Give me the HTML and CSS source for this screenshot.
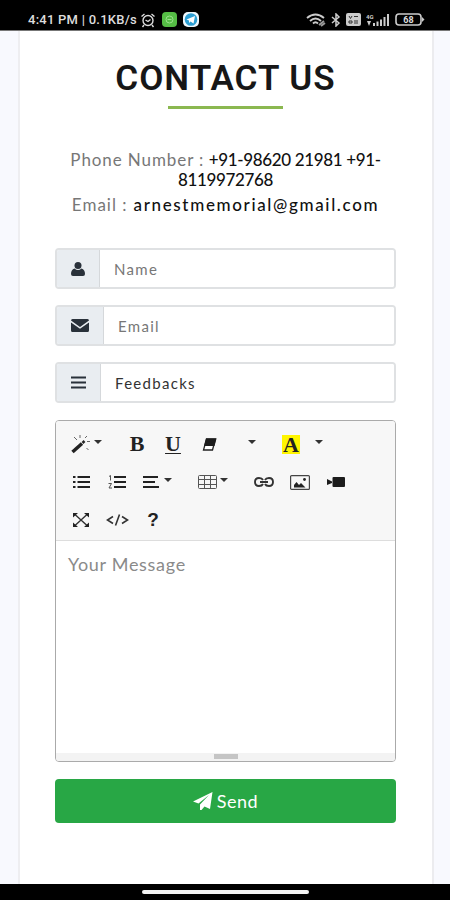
FILE: index.html
```
<!DOCTYPE html>
<html lang="en">
<head>
    <meta charset="UTF-8">
    <meta name="viewport" content="width=device-width, initial-scale=1.0">
    <title>Contact Us</title>
    <link rel="stylesheet" href="styles.css">
</head>
<body>
    <div class="status-bar">
        <div class="status-left">
            <span class="status-time">4:41 PM | 0.1KB/s</span>
            <svg class="alarm" width="16" height="16" viewBox="0 0 16 16" fill="none" stroke="#ddd" stroke-width="1.4"><circle cx="8" cy="8.5" r="5"/><path d="M1.5 4.5 4.5 2M14.500 4.500 11.500 2M5.500 8l2.500 1.500 2.500-2M4 13l-1.500 2M12 13l1.500 2"/></svg>
            <svg class="app" width="15" height="15" viewBox="0 0 15 15"><rect width="15" height="15" rx="4" fill="#55bd45"/><circle cx="7.500" cy="7.500" r="3.500" fill="none" stroke="#9be28d"/><path d="M5.500 7.500h4" stroke="#9be28d"/></svg>
            <svg class="app" width="16" height="15" viewBox="0 0 16 15"><rect width="16" height="15" rx="5" fill="#eef8fd"/><circle cx="8" cy="7.500" r="6.300" fill="#2c9fd3"/><path d="M3.500 7.500 12 4l-1.500 7.500-3-2-1.500 1.500V8.500z" fill="#fff"/></svg>
        </div>
        <div class="status-right">
            <svg width="20" height="14" viewBox="0 0 20 14" fill="none" stroke="#ccc" stroke-width="1.900"><path d="M1 5Q9.500-2 18 5M4 8q5.500-5 11 0M7 10.500q2.500-2.500 5 0"/><path d="M13 12l5-4M15 13l4-3" stroke="#999"/></svg>
            <svg width="10" height="14" viewBox="0 0 10 14" fill="none" stroke="#ccc" stroke-width="1.500"><path d="M1 4l7 6-3 3V1l3 3-7 6"/></svg>
            <svg width="15" height="13" viewBox="0 0 15 13"><rect width="15" height="13" rx="2" fill="#ccc"/><path d="M3 3l1.500 2.500L6 3M8 3.500h4M3 8h3v2H3zM8 8h4M8 10h4" fill="none" stroke="#333"/></svg>
            <svg width="24" height="14" viewBox="0 0 24 14" fill="#ccc"><path d="M7 10h2v3H7zM10.500 8.500h2V13h-2zM14 6.500h2V13h-2zM17.500 4h2v9h-2zM21 1h2v12h-2z"/><text x="0" y="6" class="tiny">4G</text><path d="M1 8h4l-2 5z"/></svg>
            <svg width="30" height="13" viewBox="0 0 30 13"><rect x="1" y="1" width="25" height="11" rx="3" fill="none" stroke="#ccc" stroke-width="1.600"/><path d="M27 4l2.500 2.500L27 9z" fill="#ccc"/><text x="13.500" y="9.800" class="battery">68</text></svg>
        </div>
    </div>

    <div class="page">
        <div class="card">
            <h1 class="title">CONTACT US</h1>
            <div class="title-line"></div>

            <div class="info">
                <p><span class="phone-label">Phone Number :</span> <b class="phone">+91-98620 21981 +91-<br>8119972768</b></p>
                <p class="mail"><span class="mail-label">Email :</span> <b>arnestmemorial@gmail.com</b></p>
            </div>

            <form>
                <div class="input-group">
                    <span class="addon addon-name"><svg width="14" height="14" viewBox="0 0 14 14" fill="#29313a"><circle cx="7" cy="3.600" r="3.500"/><path d="M3.500 6.500Q7 9.500 10.500 6.500 14 7.500 14 12q0 2-2 2H2q-2 0-2-2 0-4.500 3.500-5.500z"/></svg></span>
                    <input type="text" placeholder="Name">
                </div>
                <div class="input-group">
                    <span class="addon addon-email"><svg width="18" height="13" viewBox="0 0 18 13" fill="#29313a"><path d="M0 1.500Q0 0 1.500 0h15Q18 0 18 1.500L9 8zM0 3.500l9 6.300 9-6.300v8Q18 13 16.500 13h-15Q0 13 0 11.500z"/></svg></span>
                    <input type="text" placeholder="Email">
                </div>
                <div class="input-group">
                    <span class="addon addon-subject"><svg width="15" height="13" viewBox="0 0 15 13" stroke="#29313a" stroke-width="2"><path d="M0 1.500h15M0 6.500h15M0 11.500h15"/></svg></span>
                    <input type="text" class="subject" value="Feedbacks">
                </div>

                <div class="editor">
                    <div class="toolbar">
                        <div class="tool-row">
                            <span class="tool drop"><svg width="20" height="20" viewBox="0 0 20 20" stroke="#222" fill="none"><path d="M1.500 18 11 9.500" stroke-width="3.500"/><path d="M11.500 9l2-2" stroke-width="2.500"/><path d="M9 1v3M3 3l3 3M16 2l-2 2M16 7.500h3M15.500 14l2 2" stroke="#666"/></svg><i class="caret"></i></span>
                            <span class="tool serif">B</span>
                            <span class="tool serif underline-tool">U</span>
                            <span class="tool"><svg width="15" height="13" viewBox="0 0 15 13"><path d="M4.500 1h9L10.500 12h-9z" fill="#fff" stroke="#222" stroke-width="1.300"/><path d="M4 .5h10.500L12.500 8H2z" fill="#1c1c1c"/></svg></span>
                            <span class="tool caret-only font-caret"><i class="caret"></i></span>
                            <span class="tool serif"><span class="mark">A</span></span>
                            <span class="tool caret-only"><i class="caret"></i></span>
                        </div>
                        <div class="tool-row">
                            <span class="tool"><svg width="17" height="14" viewBox="0 0 17 14" stroke="#222" stroke-width="2"><path d="M0 2h2.500M4.500 2H17M0 7h2.500M4.500 7H17M0 12h2.500M4.500 12H17"/></svg></span>
                            <span class="tool"><svg width="18" height="14" viewBox="0 0 18 14" fill="none" stroke="#222" stroke-width="2"><path d="M6 2h12M6 7h12M6 12h12"/><path d="M1 1.500 2.500.5v5M.5 8.500h3L1 13h3" stroke-width="1" stroke="#555"/></svg></span>
                            <span class="tool drop align-tool"><svg width="16" height="12" viewBox="0 0 16 12" stroke="#222" stroke-width="2"><path d="M0 1h15M0 6h12M0 11h16"/></svg><i class="caret"></i></span>
                            <span class="tool drop table-tool"><svg width="19" height="14" viewBox="0 0 19 14" fill="none" stroke="#555"><rect x=".5" y=".5" width="18" height="13" rx="1"/><path d="M6.500.5v13M12.500.5v13M.5 4.500h18M.5 9.500h18"/></svg><i class="caret"></i></span>
                            <span class="tool"><svg width="20" height="10" viewBox="0 0 20 10" fill="none" stroke="#333" stroke-width="1.900"><path d="M9 3Q8 1 5 1 1 1 1 5t4 4q3 0 4-2M11 3q1-2 4-2 4 0 4 4t-4 4q-3 0-4-2M6 5h8"/></svg></span>
                            <span class="tool"><svg width="20" height="15" viewBox="0 0 20 15"><rect x=".6" y=".6" width="18.800" height="13.800" rx="1" fill="none" stroke="#444" stroke-width="1.200"/><path d="M4 12.500V10l2.500-3L9 10l2-2 1.500 1.500 3 3z" fill="#222"/><circle cx="14.500" cy="4.500" r="1.400" fill="#222"/></svg></span>
                            <span class="tool"><svg width="18" height="10" viewBox="0 0 18 10" fill="#1c1c1c"><path d="M0 2l5 2.500V6L0 8z"/><rect x="5.500" width="12.500" height="10" rx="1"/></svg></span>
                        </div>
                        <div class="tool-row">
                            <span class="tool"><svg width="16" height="14" viewBox="0 0 16 14" fill="#222"><path d="M2 1.500l12 11M14 1.500l-12 11" stroke="#333" stroke-width="1.400"/><path d="M0 0h5L0 4.500zM16 0v4.500L11 0zM0 14V9.500L5 14zM16 14h-5l5-4.500z"/></svg></span>
                            <span class="tool"><svg width="23" height="12" viewBox="0 0 23 12" fill="none" stroke="#333" stroke-width="1.600"><path d="M7 2.500 1.500 6 7 9.500M16 2.500 21.500 6 16 9.500M13.500.5l-4 11"/></svg></span>
                            <span class="tool help-tool">?</span>
                        </div>
                    </div>
                    <div class="message">Your Message</div>
                    <div class="resize-bar"><div class="grip"></div></div>
                </div>

                <button type="button" class="send">
                    <svg width="20" height="18" viewBox="0 0 20 18" fill="#fff"><path d="M19.500 0 17 17l-5.500-2.500L8.500 18H7v-5.500L16 3 5.500 11.500 0 9.500z"/></svg>
                    <span>Send</span>
                </button>
            </form>
        </div>
    </div>

    <div class="nav-bar"><div class="nav-handle"></div></div>
</body>
</html>
```

FILE: styles.css
```
* { margin: 0; padding: 0; box-sizing: border-box; }
body { width: 450px; height: 900px; overflow: hidden; display: flex; flex-direction: column; font-family: Lato, "Liberation Sans", sans-serif; background: #f8f9fe; }
svg { display: block; flex-shrink: 0; }

.status-bar { height: 31px; padding: 8px 25px 0 28px; background: #000; border-bottom: 1px solid #777; display: flex; justify-content: space-between; color: #ddd; }
.status-left, .status-right { display: flex; align-items: center; height: 23px; }
.status-time { font: 500 13px Roboto, sans-serif; width: 110px; white-space: nowrap; letter-spacing: 0.25px; }
.alarm { margin-left: 2px; }
.app { margin-left: 6px; }
.status-right { gap: 5px; }
.tiny { font: bold 6px Roboto, sans-serif; }
.battery { font: bold 9px Roboto, sans-serif; fill: #ddd; text-anchor: middle; }

.page { flex: 1; padding: 0 16px 0 18px; }
.card { height: 100%; padding: 28px 36px 0 35px; background: #fff; border-left: 2px solid #eeeef1; border-right: 2px solid #ececef; }
.title { font: 600 35px/40px Roboto, sans-serif; color: #171717; text-align: center; white-space: nowrap; letter-spacing: 1px; }
.title-line { width: 115px; height: 3px; margin: 7px auto 0; background: #8bb850; }

.info { margin: 41px 0 33px; text-align: center; font-size: 17px; line-height: 20px; color: #777; white-space: nowrap; }
.info b { font-weight: 500; color: #111; }
.phone-label { letter-spacing: 0.9px; }
.phone { letter-spacing: -0.35px; }
.mail { margin-top: 5px; letter-spacing: 1.6px; }
.mail-label { letter-spacing: 1px; }
.mail b { letter-spacing: 1.65px; }

.input-group { display: flex; height: 41px; margin-bottom: 16px; border: 2px solid #dfe1e3; border-radius: 4px; overflow: hidden; }
.addon { display: flex; align-items: center; justify-content: center; background: #e9edf1; border-right: 1px solid #d5d8db; }
.addon-name { width: 43px; }
.addon-email { width: 47px; }
.addon-subject { width: 44px; }
.input-group input { flex: 1; min-width: 0; padding: 0 14px; border: none; outline: none; background: #fff; font: 15px Lato, sans-serif; letter-spacing: 1.3px; color: #333; }
.input-group input::placeholder { color: #777; }

.editor { height: 342px; margin-top: 17px; border: 1px solid #aaa; border-radius: 4px; display: flex; flex-direction: column; overflow: hidden; }
.toolbar { height: 120px; padding: 4px 7px; background: #f7f7f7; border-bottom: 1px solid #ddd; }
.tool-row { display: flex; height: 38px; }
.tool { width: 36px; display: flex; align-items: center; justify-content: center; color: #222; }
.drop { width: 56px; padding-left: 8px; gap: 3px; justify-content: flex-start; }
.caret { border: 4.5px solid transparent; border-top-color: #333; border-bottom: none; margin-bottom: 4px; }
.serif { font: bold 22px "Liberation Serif", serif; }
.underline-tool { text-decoration: underline; text-decoration-thickness: 1px; text-underline-offset: 2px; }
.caret-only { width: 20px; }
.font-caret { margin-left: 15px; margin-right: 11px; }
.mark { width: 18px; height: 19px; line-height: 20px; text-align: center; background: #fff500; }
.align-tool { width: 55px; gap: 5px; }
.table-tool { gap: 3px; }
.help-tool { font: bold 19px "Liberation Sans", sans-serif; }
.message { flex: 1; padding: 11px 12px; font-size: 18px; line-height: 24px; letter-spacing: 0.7px; color: #8a8a8a; }
.resize-bar { height: 8px; padding-top: 1px; background: #f3f3f3; }
.grip { width: 24px; height: 5px; margin: 0 auto; background: #c5c5c5; }

.send { width: 100%; height: 44px; margin-top: 17px; display: flex; align-items: center; justify-content: center; gap: 4px; border: none; border-radius: 4px; background: #28a745; color: #fff; font: 18px Lato, sans-serif; letter-spacing: 0.5px; }

.nav-bar { height: 16px; padding-top: 6px; background: #000; }
.nav-handle { width: 167px; height: 4px; margin: 0 auto; border-radius: 2px; background: #f5f5f5; }
```
